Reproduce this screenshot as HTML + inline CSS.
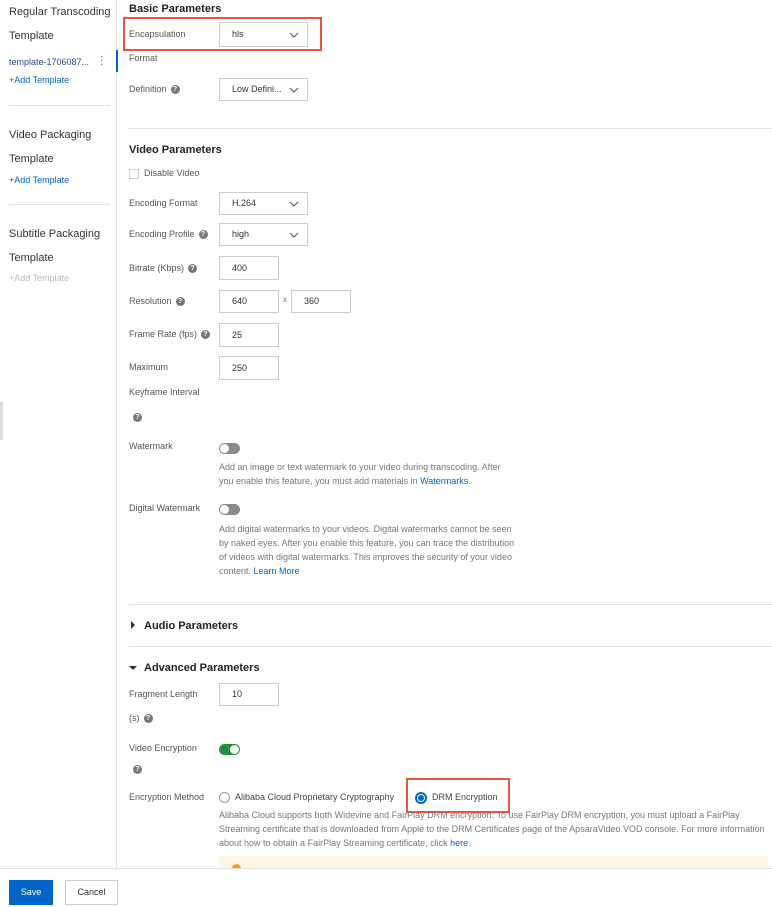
<!DOCTYPE html>
<html><head><meta charset="utf-8"><style>
body{margin:0;width:772px;height:906px;overflow:hidden;background:#fff;font-family:"Liberation Sans",sans-serif;color:#333;position:relative}
.a{position:absolute;white-space:nowrap}
.s{font-size:11px;color:#333}
.l{font-size:9px;color:#555}
.h{font-size:11px;font-weight:bold;color:#222}
.sel,.in{position:absolute;border:1px solid #ccc;box-sizing:border-box;font-size:9px;color:#333;padding-left:12px;background:#fff}
.sel svg{position:absolute;right:8px;top:50%;margin-top:-3px}
.q{display:inline-block;width:9px;height:9px;border-radius:50%;background:#777;color:#fff;font-size:7px;text-align:center;line-height:9px;font-weight:bold;vertical-align:middle;margin-left:4px}
.hr{position:absolute;height:1px;background:#e3e3e3}
.d{font-size:9px;color:#777;line-height:14px;position:absolute}
.tg{position:absolute;width:21px;height:11px;border-radius:6px;background:#8a8a8a}
.tg:after{content:"";position:absolute;left:1px;top:1px;width:9px;height:9px;border-radius:50%;background:#fff}
.lk{color:#0064c8}
</style></head><body>
<div style="position:absolute;left:116px;top:0;width:1px;height:868px;background:#e3e3e3"></div>
<div style="position:absolute;left:0;top:402px;width:3px;height:38px;background:#ddd"></div>
<div class="a s" style="left:9px;top:6px">Regular Transcoding</div>
<div class="a s" style="left:9px;top:30px">Template</div>
<div class="a" style="left:9px;top:57px;font-size:9px;color:#2a4a8a">template-1706087...</div>
<div class="a" style="left:100px;top:55px;font-size:10px;color:#0064c8;line-height:4px">·<br>·<br>·</div>
<div style="position:absolute;left:116px;top:50px;width:2px;height:22px;background:#0064c8"></div>
<div class="a" style="left:9px;top:75px;font-size:9px;color:#0064c8">+Add Template</div>
<div class="hr" style="left:9px;top:105px;width:101px"></div>
<div class="a s" style="left:9px;top:129px">Video Packaging</div>
<div class="a s" style="left:9px;top:153px">Template</div>
<div class="a" style="left:9px;top:175px;font-size:9px;color:#0064c8">+Add Template</div>
<div class="hr" style="left:9px;top:204px;width:101px"></div>
<div class="a s" style="left:9px;top:228px">Subtitle Packaging</div>
<div class="a s" style="left:9px;top:252px">Template</div>
<div class="a" style="left:9px;top:273px;font-size:9px;color:#bbb">+Add Template</div>

<div class="a h" style="left:129px;top:3px">Basic Parameters</div>
<div style="position:absolute;left:123px;top:17px;width:199px;height:34px;border:2px solid #e8553a;box-sizing:border-box"></div>
<div class="a l" style="left:129px;top:29px">Encapsulation</div>
<div class="sel" style="left:219px;top:22px;width:89px;height:25px;line-height:23px">hls<svg width="10" height="6"><path d="M1 1l4 4 4-4" stroke="#555" fill="none"/></svg></div>
<div class="a l" style="left:129px;top:53px">Format</div>
<div class="a l" style="left:129px;top:84px">Definition<span class="q">?</span></div>
<div class="sel" style="left:219px;top:78px;width:89px;height:23px;line-height:21px">Low Defini...<svg width="10" height="6"><path d="M1 1l4 4 4-4" stroke="#555" fill="none"/></svg></div>
<div class="hr" style="left:129px;top:128px;width:643px"></div>
<div class="a h" style="left:129px;top:144px">Video Parameters</div>
<div style="position:absolute;left:129px;top:169px;width:8px;height:8px;border:1px solid #ccc"></div>
<div class="a l" style="left:144px;top:168px">Disable Video</div>
<div class="a l" style="left:129px;top:198px">Encoding Format</div>
<div class="sel" style="left:219px;top:192px;width:89px;height:23px;line-height:21px">H.264<svg width="10" height="6"><path d="M1 1l4 4 4-4" stroke="#555" fill="none"/></svg></div>
<div class="a l" style="left:129px;top:229px">Encoding Profile<span class="q">?</span></div>
<div class="sel" style="left:219px;top:223px;width:89px;height:23px;line-height:21px">high<svg width="10" height="6"><path d="M1 1l4 4 4-4" stroke="#555" fill="none"/></svg></div>
<div class="a l" style="left:129px;top:263px">Bitrate (Kbps)<span class="q">?</span></div>
<div class="in" style="left:219px;top:256px;width:60px;height:24px;line-height:22px">400</div>
<div class="a l" style="left:129px;top:296px">Resolution<span class="q">?</span></div>
<div class="in" style="left:219px;top:290px;width:60px;height:23px;line-height:21px">640</div>
<div class="a" style="left:283px;top:295px;font-size:8px;color:#777">x</div>
<div class="in" style="left:291px;top:290px;width:60px;height:23px;line-height:21px">360</div>
<div class="a l" style="left:129px;top:329px">Frame Rate (fps)<span class="q">?</span></div>
<div class="in" style="left:219px;top:323px;width:60px;height:24px;line-height:22px">25</div>
<div class="a l" style="left:129px;top:362px">Maximum</div>
<div class="in" style="left:219px;top:356px;width:60px;height:24px;line-height:22px">250</div>
<div class="a l" style="left:129px;top:387px">Keyframe Interval</div>
<div class="a" style="left:129px;top:409px"><span class="q" style="margin-left:4px">?</span></div>
<div class="a l" style="left:129px;top:441px">Watermark</div>
<div class="tg" style="left:219px;top:443px"></div>
<div class="d" style="left:219px;top:460px">Add an image or text watermark to your video during transcoding. After<br>you enable this feature, you must add materials in <span class="lk">Watermarks</span>.</div>
<div class="a l" style="left:129px;top:503px">Digital Watermark</div>
<div class="tg" style="left:219px;top:504px"></div>
<div class="d" style="left:219px;top:522px">Add digital watermarks to your videos. Digital watermarks cannot be seen<br>by naked eyes. After you enable this feature, you can trace the distribution<br>of videos with digital watermarks. This improves the security of your video<br>content. <span class="lk">Learn More</span></div>
<div class="hr" style="left:129px;top:604px;width:643px"></div>
<div class="a" style="left:131px;top:621px;width:0;height:0;border-left:4px solid #333;border-top:4px solid transparent;border-bottom:4px solid transparent"></div>
<div class="a h" style="left:144px;top:620px">Audio Parameters</div>
<div class="hr" style="left:129px;top:646px;width:643px"></div>
<div class="a" style="left:129px;top:666px;width:0;height:0;border-top:4px solid #333;border-left:4px solid transparent;border-right:4px solid transparent"></div>
<div class="a h" style="left:144px;top:662px">Advanced Parameters</div>
<div class="a l" style="left:129px;top:689px">Fragment Length</div>
<div class="in" style="left:219px;top:683px;width:60px;height:23px;line-height:21px">10</div>
<div class="a l" style="left:129px;top:713px">(s)<span class="q">?</span></div>
<div class="a l" style="left:129px;top:743px">Video Encryption</div>
<div class="tg" style="left:219px;top:744px;background:#1e8e3e"></div>
<div style="position:absolute;left:230px;top:745px;width:9px;height:9px;border-radius:50%;background:#fff"></div>
<div style="position:absolute;left:220px;top:745px;width:9px;height:9px;border-radius:50%;background:#1e8e3e"></div>
<div class="a" style="left:129px;top:761px"><span class="q" style="margin-left:4px">?</span></div>
<div class="a l" style="left:129px;top:792px">Encryption Method</div>
<div style="position:absolute;left:219px;top:792px;width:9px;height:9px;border:1px solid #999;border-radius:50%"></div>
<div class="a" style="left:235px;top:792px;font-size:9px;color:#444">Alibaba Cloud Proprietary Cryptography</div>
<div style="position:absolute;left:406px;top:778px;width:104px;height:35px;border:2px solid #e8553a;box-sizing:border-box"></div>
<div style="position:absolute;left:415px;top:792px;width:8px;height:8px;border:2px solid #0064c8;border-radius:50%;background:#fff"></div>
<div style="position:absolute;left:418px;top:795px;width:6px;height:6px;border-radius:50%;background:#0064c8"></div>
<div class="a" style="left:432px;top:792px;font-size:9px;color:#444">DRM Encryption</div>
<div class="d" style="left:219px;top:808px">Alibaba Cloud supports both Widevine and FairPlay DRM encryption. To use FairPlay DRM encryption, you must upload a FairPlay<br>Streaming certificate that is downloaded from Apple to the DRM Certificates page of the ApsaraVideo VOD console. For more information<br>about how to obtain a FairPlay Streaming certificate, click <span class="lk">here</span>.</div>
<div style="position:absolute;left:219px;top:856px;width:549px;height:20px;background:#fdf6e3"></div>
<div style="position:absolute;left:232px;top:864px;width:9px;height:9px;border-radius:50%;background:#f0a020"></div>
<div style="position:absolute;left:0;top:868px;width:772px;height:38px;background:#fff;border-top:1px solid #e3e3e3"></div>
<div style="position:absolute;left:9px;top:880px;width:44px;height:25px;background:#0064c8;color:#fff;font-size:9px;text-align:center;line-height:25px">Save</div>
<div style="position:absolute;left:65px;top:880px;width:53px;height:25px;border:1px solid #ccc;box-sizing:border-box;color:#333;font-size:9px;text-align:center;line-height:23px">Cancel</div>
</body></html>
